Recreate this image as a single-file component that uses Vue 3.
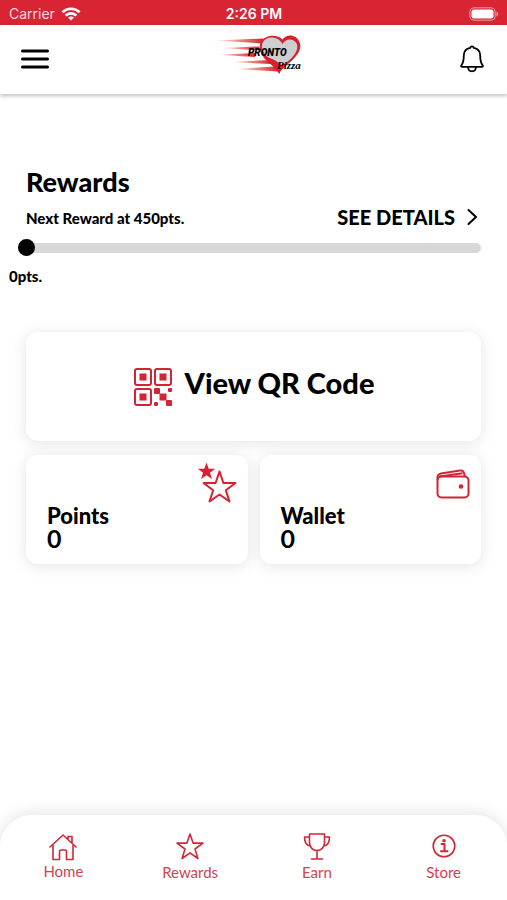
<script setup>
import { ref } from 'vue'

const points = ref(0)
const wallet = ref(0)
const nextReward = 450
</script>

<template>
  <div class="app">
    <div class="status">
      <div class="carrier">
        <span>Carrier</span>
        <svg width="20" height="14" viewBox="0 0 20 14" fill="none" stroke="#fff" stroke-width="2.6" aria-hidden="true">
          <path d="M1.4 5.2C6.2.6 13.800.6 18.600 5.200" />
          <path d="M4.600 8.500C7.700 5.600 12.300 5.600 15.400 8.500" />
          <path d="M10 13.600 7 10.600C8.700 9.100 11.300 9.100 13 10.600Z" fill="#fff" stroke="none" />
        </svg>
      </div>
      <span class="time">2:26 PM</span>
      <svg class="battery" width="30" height="14" viewBox="0 0 30 14" aria-hidden="true">
        <rect x=".8" y=".8" width="25.400" height="12.400" rx="4" fill="none" stroke="#f0a0a8" />
        <rect x="2.500" y="2.500" width="22" height="9" rx="2.500" fill="#fff" />
        <path d="M27.500 4.500c2.200.8 2.200 4.200 0 5z" fill="#f0a0a8" />
      </svg>
    </div>

    <header class="header">
      <button class="icon-button" type="button" aria-label="Menu">
        <svg width="28" height="20" viewBox="0 0 28 20" stroke="#000" stroke-width="3" stroke-linecap="round" aria-hidden="true">
          <path d="M1.500 2h25M1.500 10h25M1.500 18h25" />
        </svg>
      </button>
      <svg class="logo" width="100" height="44" viewBox="0 0 100 44" role="img" aria-label="Pronto Pizza">
        <defs>
          <linearGradient id="streak" x1="0" x2="1" y1="0" y2="0">
            <stop offset="0" stop-color="#e86a55" stop-opacity=".05" />
            <stop offset=".5" stop-color="#e4574a" stop-opacity=".7" />
            <stop offset="1" stop-color="#d9202f" />
          </linearGradient>
        </defs>
        <g fill="url(#streak)">
          <path d="M10 7.500 58 5.500V10.500Z" />
          <path d="M17 15 54 13.500V17.500Z" />
          <path d="M12 21.800 50 20V24Z" />
          <path d="M25 29 66 27V31Z" />
          <path d="M30 36 70 33.500 73 38.500Z" />
        </g>
        <path d="M77.500 6.500C72 .5 58 1.500 55 11c-2 8 4 14 10 19.500 4 3.500 7 6.500 9 10 3-5 9-9 14-14C94 20.500 97 14.500 94.500 9 91 1.500 82 .5 77.500 6.500Z" fill="#d9202f" />
        <path d="M77.500 11C73 2 59 2.500 57 11.500c-1 6 3 11 9 15l10 6c5-2.500 10-6 13.500-11 3-4.500 4-9 1-12.500-4-4-10-3-13 2Z" fill="#cdced0" />
        <path d="M58 24c7 0 13 3 18 8l-1.500 9C71 34 64 30 58 24Z" fill="#d9202f" />
        <text x="43" y="23" class="logo-pronto">PRONTO</text>
        <text x="72" y="36" class="logo-pizza">Pizza</text>
      </svg>
      <button class="icon-button" type="button" aria-label="Notifications">
        <svg width="24" height="28" viewBox="0 0 24 28" fill="none" stroke="#000" stroke-width="1.800" stroke-linejoin="round" stroke-linecap="round" aria-hidden="true">
          <path d="M10.300 2.800C10.500.8 13.500.8 13.700 2.800 18.300 3.600 20.200 6.800 20.200 10.500c0 5.500.8 7.700 2.300 9.600.8.900.3 1.700-.8 1.700H2.300c-1.100 0-1.600-.8-.8-1.700C3 18.200 3.800 16 3.800 10.500c0-3.700 1.900-6.900 6.500-7.700Z" />
          <path d="M8 22c.4 5.800 7.600 5.800 8 0" />
        </svg>
      </button>
    </header>

    <main class="main">
      <section class="rewards">
        <h1>Rewards</h1>
        <div class="reward-row">
          <label for="progress">Next Reward at {{ nextReward }}pts.</label>
          <a class="details" href="#details">
            SEE DETAILS
            <svg width="11" height="18" viewBox="0 0 11 18" fill="none" stroke="#000" stroke-width="2" stroke-linecap="round" aria-hidden="true">
              <path d="M1.500 2 9 9l-7.500 7" />
            </svg>
          </a>
        </div>
        <input id="progress" v-model.number="points" class="slider" type="range" min="0" :max="nextReward">
        <output class="current" for="progress">{{ points }}pts.</output>
      </section>

      <section class="cards">
        <button class="card qr" type="button">
          <svg width="40" height="40" viewBox="0 0 40 40" fill="#d32433" aria-hidden="true">
            <g fill="none" stroke="#d32433" stroke-width="2">
              <rect x="2" y="2" width="16" height="16" rx="2" />
              <rect x="22" y="2" width="16" height="16" rx="2" />
              <rect x="2" y="22" width="16" height="16" rx="2" />
            </g>
            <rect x="6.500" y="6.500" width="7" height="7" />
            <rect x="26.500" y="6.500" width="7" height="7" />
            <rect x="6.500" y="26.500" width="7" height="7" />
            <rect x="26.500" y="26.500" width="7" height="7" />
            <rect x="21" y="21" width="6" height="6" rx="1" />
            <rect x="33" y="33" width="6" height="6" rx="1" />
            <rect x="35" y="21" width="4" height="4" rx="1" />
            <rect x="21" y="35" width="4" height="4" rx="1" />
          </svg>
          <span>View QR Code</span>
        </button>
        <button class="card stat" type="button">
          <svg width="40" height="42" viewBox="0 0 40 42" fill="none" stroke="#d9202f" stroke-width="2" stroke-linejoin="round" aria-hidden="true">
            <path d="M9.500-.5 11.700 5.700h6.500l-5.200 4 2 6.300-5.500-3.800-5.500 3.800 2-6.300-5.200-4h6.500Z" fill="#d9202f" stroke="none" />
            <path d="M22.500 8.500 26.400 20H38.500L28.800 27.200 32.500 38.500 22.500 31.500 12.500 38.500 16.200 27.200 6.500 20H18.600Z" />
          </svg>
          <span class="stat-name">Points</span>
          <span class="stat-value">{{ points }}</span>
        </button>
        <button class="card stat" type="button">
          <svg class="wallet" width="34" height="30" viewBox="0 0 34 30" fill="none" stroke="#d32433" stroke-width="2" stroke-linejoin="round" aria-hidden="true">
            <rect x="1.500" y="7.500" width="31" height="21" rx="4" />
            <path d="M1.500 11V8.500C1.500 6 3 4.800 5 4.400L24 1.500c2-.3 3.300.5 3.800 2L29 7.500M4 7.500 26.500 4.200" />
            <circle cx="25" cy="17.500" r="2.300" fill="#d32433" stroke="none" />
          </svg>
          <span class="stat-name">Wallet</span>
          <span class="stat-value">{{ wallet }}</span>
        </button>
      </section>
    </main>

    <nav class="tabs" aria-label="Main">
      <a href="#home">
        <svg width="28" height="28" viewBox="0 0 28 28" aria-hidden="true">
          <path d="M1 14 14 2 27 14M4 12v14.500h6.500V18.500c0-1 .6-1.500 1.500-1.500h4c.9 0 1.500.5 1.500 1.500v8H24V12M19 6V3.500h4V10" />
        </svg>
        <span>Home</span>
      </a>
      <a href="#rewards">
        <svg width="28" height="29" viewBox="0 0 28 29" aria-hidden="true">
          <path d="M14 1 17.100 10.100H27L19 16l2.900 9.500L14 19.900 6.100 25.500 9 16 1 10.100h9.900Z" />
        </svg>
        <span>Rewards</span>
      </a>
      <a href="#earn">
        <svg width="28" height="29" viewBox="0 0 28 29" aria-hidden="true">
          <path d="M6.500 1h15V9.500c0 5-3.500 8-7.500 8s-7.500-3-7.500-8ZM6.500 4h-5C1.500 9.500 3 12.500 7.500 13M21.500 4h5C26.500 9.500 25 12.500 20.500 13M14 17.500V26M8.500 26h11" />
        </svg>
        <span>Earn</span>
      </a>
      <a href="#store">
        <svg width="28" height="29" viewBox="0 0 28 29" aria-hidden="true">
          <circle cx="14" cy="13" r="10.800" />
          <path d="M11.500 11h3v7M11 18.300h6.500" stroke-width="2" />
          <circle cx="14" cy="7.700" r="1" />
        </svg>
        <span>Store</span>
      </a>
    </nav>
  </div>
</template>

<style>
body {
  margin: 0;
  background: #fff;
}
</style>

<style scoped>
.app {
  display: flex;
  flex-direction: column;
  min-height: 100vh;
  overflow: hidden;
  color: #000;
  background: #fff;
  font-family: Lato, "Liberation Sans", sans-serif;
}

.app * {
  box-sizing: border-box;
}

button {
  padding: 0;
  border: 0;
  color: inherit;
  background: none;
  font: inherit;
  cursor: pointer;
}

a {
  color: inherit;
  text-decoration: none;
}

svg {
  display: block;
  flex: none;
}

.status {
  display: grid;
  grid-template-columns: 1fr auto 1fr;
  align-items: center;
  height: 25px;
  padding: 2px 8px 0 9px;
  color: #fff;
  background: #d92433;
  font: 14px/20px Inter, sans-serif;
}

.carrier {
  display: flex;
  align-items: center;
  gap: 6px;
  color: #fbdde0;
}

.time {
  font-weight: 600;
}

.battery {
  justify-self: end;
}

.header {
  display: flex;
  justify-content: space-between;
  align-items: flex-start;
  height: 69px;
  padding: 8px 23px 8px 21px;
  box-shadow: 0 2px 4px rgba(0, 0, 0, 0.25);
}

.icon-button {
  display: flex;
  align-items: center;
  height: 52px;
}

.logo-pronto {
  font: italic 900 10px Roboto, sans-serif;
}

.logo-pizza {
  font: italic 700 11px "Liberation Serif", serif;
}

.main {
  flex: 1;
  padding: 72px 26px 40px;
}

h1 {
  margin: 0;
  font-size: 27px;
  line-height: 32px;
  font-weight: 900;
}

.reward-row {
  display: flex;
  justify-content: space-between;
  align-items: center;
  margin-top: 8px;
  font-size: 15px;
  line-height: 24px;
  font-weight: 900;
}

.details {
  display: flex;
  align-items: center;
  gap: 12px;
  padding: 0 3px 2px 0;
  font-size: 20px;
  line-height: 22px;
}

.slider {
  display: block;
  width: calc(100% + 8px);
  height: 16px;
  margin: 10px 0 0 -8px;
  appearance: none;
  background: none;
}

.slider::-webkit-slider-runnable-track {
  height: 10px;
  border-radius: 5px;
  background: #d8d8d8;
}

.slider::-webkit-slider-thumb {
  width: 17px;
  height: 17px;
  margin-top: -4px;
  border-radius: 50%;
  appearance: none;
  background: #000;
}

.current {
  display: block;
  margin: 10px 0 0 -17px;
  font-size: 15px;
  line-height: 20px;
  font-weight: 900;
}

.cards {
  display: grid;
  grid-template-columns: 1fr 1fr;
  gap: 14px 12px;
  margin-top: 46px;
}

.card {
  min-height: 109px;
  border-radius: 12px;
  background: #fff;
  box-shadow: 0 2px 16px rgba(0, 0, 0, 0.11);
}

.qr {
  display: flex;
  grid-column: 1 / -1;
  justify-content: center;
  align-items: center;
  gap: 12px;
  font-size: 29px;
  line-height: 36px;
  font-weight: 900;
}

.qr span {
  padding-bottom: 8px;
}

.stat {
  display: grid;
  grid-template-rows: 42px 22px 22px;
  align-content: start;
  justify-items: start;
  padding: 8px 11px 10px 21px;
  text-align: left;
}

.stat svg {
  justify-self: end;
}

.stat .wallet {
  align-self: center;
}

.stat-name {
  font-size: 22px;
  line-height: 22px;
  font-weight: 900;
}

.stat-value {
  font-size: 25px;
  line-height: 22px;
  font-weight: 700;
}

.tabs {
  display: grid;
  grid-template-columns: repeat(4, 1fr);
  min-height: 85px;
  padding-top: 18px;
  border-radius: 32px 32px 0 0;
  background: #fff;
  box-shadow: 0 -2px 16px rgba(0, 0, 0, 0.11);
}

.tabs a {
  display: flex;
  flex-direction: column;
  align-items: center;
  color: #cf4451;
  font-size: 15px;
  line-height: 20px;
}

.tabs svg {
  fill: none;
  stroke: #cd2937;
  stroke-width: 1.6;
  stroke-linejoin: round;
  stroke-linecap: round;
}
</style>
